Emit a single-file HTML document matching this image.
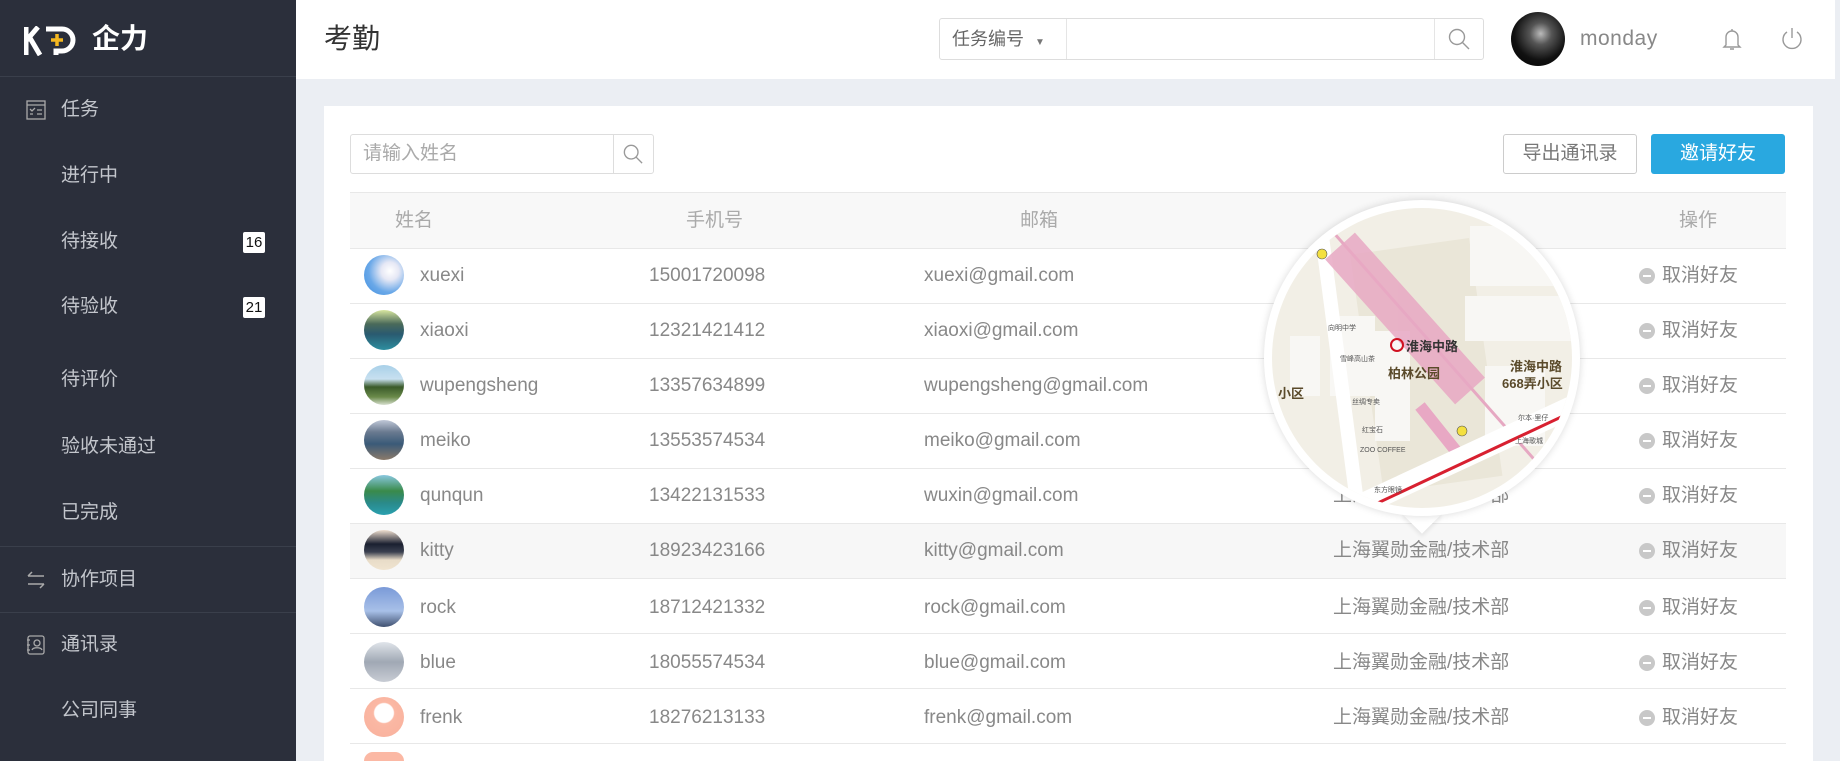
<!DOCTYPE html>
<html style="width:1840px;height:761px;overflow:hidden"><head><meta charset="utf-8">
<style>
*{margin:0;padding:0;box-sizing:border-box}
body{width:1840px;height:761px;overflow:hidden;background:#ebeef3;font-family:"Liberation Sans","Noto Sans CJK SC",sans-serif;position:relative}
.side{position:absolute;left:0;top:0;width:296px;height:761px;background:#2b2f3b}
.logo{height:77px;border-bottom:1px solid #3a3f4b;position:relative}
.nav{position:absolute;left:61px;color:#c3c6cc;font-size:19px;line-height:24px;transform:translateY(-12px)}
.ico{position:absolute;left:26px;transform:translateY(-10px)}
.badge{position:absolute;left:243px;width:22px;height:21px;background:#fff;color:#111;font-size:15px;line-height:21px;text-align:center;border-radius:2px;transform:translateY(-10px)}
.div{position:absolute;left:0;width:296px;height:1px;background:#3a3f4b}
.hdr{position:absolute;left:296px;top:0;width:1539px;height:79px;background:#fff}
.card{position:absolute;left:324px;top:106px;width:1489px;height:655px;background:#fff}
.t{position:absolute;color:#888;font-size:19px;line-height:24px;transform:translateY(-11px);white-space:nowrap}
.row{position:absolute;left:350px;width:1436px;height:55px;border-bottom:1px solid #e8e8e8}
.av{position:absolute;left:364px;width:40px;height:40px;border-radius:50%;transform:translateY(-20px)}
.op{position:absolute;left:1639px;width:16px;height:16px;border-radius:50%;background:#c8c8c8;transform:translateY(-7px)}
.op:after{content:"";position:absolute;left:4px;top:7px;width:8px;height:2px;background:#fff}
</style></head><body>
<div class="side">
 <div class="logo">
  <svg style="position:absolute;left:24px;top:26px" width="56" height="30" viewBox="0 0 56 30"><path d="M2 1v28M2 15 14 1M6 12l10 17" stroke="#fff" stroke-width="5" fill="none"/><path d="M22 3h16a11 11 0 0 1 0 22h-6v4" stroke="#fff" stroke-width="5" fill="none"/><path d="M33 8v12M27 14h12" stroke="#f5b820" stroke-width="3.5"/></svg>
  <div style="position:absolute;left:92px;top:22px;color:#fff;font-size:28px;font-weight:bold;line-height:34px">企力</div>
 </div>
 <svg class="ico" style="top:110px" width="20" height="20" viewBox="0 0 20 20" fill="none" stroke="#aaa" stroke-width="1.3"><rect x="1" y="1" width="18" height="18"/><path d="M1 5h18M4 9l2 2 3-3M11 10h5M4 14h3M11 14h5"/></svg>
 <div class="nav" style="top:110px">任务</div>
 <div class="nav" style="top:176px">进行中</div>
 <div class="nav" style="top:242px">待接收</div><div class="badge" style="top:242px">16</div>
 <div class="nav" style="top:307px">待验收</div><div class="badge" style="top:307px">21</div>
 <div class="nav" style="top:380px">待评价</div>
 <div class="nav" style="top:447px">验收未通过</div>
 <div class="nav" style="top:513px">已完成</div>
 <div class="div" style="top:546px"></div>
 <svg class="ico" style="top:580px" width="20" height="20" viewBox="0 0 20 20" fill="none" stroke="#aaa" stroke-width="1.5"><path d="M2 6h16M2 6l4-4M18 14H2M18 14l-4 4"/></svg>
 <div class="nav" style="top:580px">协作项目</div>
 <div class="div" style="top:612px"></div>
 <svg class="ico" style="top:645px" width="20" height="20" viewBox="0 0 20 20" fill="none" stroke="#aaa" stroke-width="1.3"><rect x="2" y="1" width="16" height="18" rx="2"/><circle cx="11" cy="8" r="3"/><path d="M6 15c1-3 9-3 10 0M1 5h3M1 10h3M1 15h3"/></svg>
 <div class="nav" style="top:645px">通讯录</div>
 <div class="nav" style="top:711px">公司同事</div>
</div>

<div class="hdr">
 <div style="position:absolute;left:28px;top:22px;font-size:28px;color:#333;line-height:34px">考勤</div>
 <div style="position:absolute;left:643px;top:18px;width:545px;height:42px;border:1px solid #ddd;border-radius:3px">
  <div style="position:absolute;left:0;top:0;width:127px;height:40px;border-right:1px solid #e5e5e5;color:#666;font-size:18px;line-height:40px;padding-left:12px">任务编号 <span style="font-size:10px;color:#777;margin-left:6px">▼</span></div>
  <div style="position:absolute;right:0;top:0;width:49px;height:40px;border-left:1px solid #e5e5e5"></div>
  <svg style="position:absolute;right:13px;top:9px" width="22" height="22" viewBox="0 0 22 22" fill="none" stroke="#999" stroke-width="1.4"><circle cx="9" cy="9" r="7.5"/><path d="M14.5 14.5 21 21"/></svg>
 </div>
 <div style="position:absolute;left:1215px;top:12px;width:54px;height:54px;border-radius:50%;background:radial-gradient(circle at 55% 40%,#bbb 0,#555 25%,#111 60%,#000 100%)"></div>
 <div style="position:absolute;left:1284px;top:25px;font-size:21px;color:#888;line-height:28px;letter-spacing:0.5px">monday</div>
 <svg style="position:absolute;left:1426px;top:27px" width="20" height="24" viewBox="0 0 20 24" fill="none" stroke="#999" stroke-width="1.4"><path d="M4 18V10a6 6 0 0 1 12 0v8l2 2H2zM8 22h4M10 2v2"/></svg>
 <svg style="position:absolute;left:1484px;top:27px" width="24" height="24" viewBox="0 0 24 24" fill="none" stroke="#999" stroke-width="1.4"><path d="M7 5a9 9 0 1 0 10 0M12 1v10"/></svg>
</div>

<div class="card"></div>
<div style="position:absolute;left:350px;top:134px;width:304px;height:40px;border:1px solid #ddd;border-radius:3px">
 <div style="position:absolute;left:12px;top:0;line-height:38px;font-size:19px;color:#aaa">请输入姓名</div>
 <div style="position:absolute;right:0;top:0;width:40px;height:38px;border-left:1px solid #ddd"></div>
 <svg style="position:absolute;right:10px;top:9px" width="20" height="20" viewBox="0 0 22 22" fill="none" stroke="#999" stroke-width="1.5"><circle cx="9" cy="9" r="7.5"/><path d="M14.5 14.5 21 21"/></svg>
</div>
<div style="position:absolute;left:1503px;top:134px;width:134px;height:40px;border:1px solid #ccc;border-radius:3px;font-size:19px;color:#777;text-align:center;line-height:38px">导出通讯录</div>
<div style="position:absolute;left:1651px;top:134px;width:134px;height:40px;background:#29a8e0;border-radius:3px;font-size:19px;color:#fff;text-align:center;line-height:40px">邀请好友</div>

<div style="position:absolute;left:350px;top:192px;width:1436px;height:57px;background:#f8f8f8;border-top:1px solid #e8e8e8;border-bottom:1px solid #e8e8e8"></div>
<div class="t" style="top:220px;left:395px;color:#aaa">姓名</div>
<div class="t" style="top:220px;left:686px;color:#aaa">手机号</div>
<div class="t" style="top:220px;left:1020px;color:#aaa">邮箱</div>
<div class="t" style="top:220px;left:1679px;color:#aaa">操作</div>

<div class="row" style="top:249px"></div>
<div class="row" style="top:304px"></div>
<div class="row" style="top:359px"></div>
<div class="row" style="top:414px"></div>
<div class="row" style="top:469px"></div>
<div class="row" style="top:524px;background:#f7f7f7"></div>
<div class="row" style="top:579px"></div>
<div class="row" style="top:634px"></div>
<div class="row" style="top:689px"></div>

<div class="av" style="top:275px;background:radial-gradient(circle at 65% 40%,#fff 0,#e6e8f5 25%,#6aa8e8 60%,#3d8ee0 100%)"></div>
<div class="av" style="top:330px;background:linear-gradient(#d8e6a0 0,#4a6a5a 35%,#2a5a70 60%,#2d8ea0 100%)"></div>
<div class="av" style="top:385px;background:linear-gradient(#a8d0e8 0,#c8e0f0 35%,#3a5a2a 55%,#6a8a4a 80%,#d8e0d0 100%)"></div>
<div class="av" style="top:440px;background:linear-gradient(#c0c8d8 0,#6a7a90 30%,#3a5a78 60%,#8a7a6a 100%)"></div>
<div class="av" style="top:495px;background:linear-gradient(#8ac8e0 0,#3a8a4a 40%,#2a8a8a 70%,#2aa0b0 100%)"></div>
<div class="av" style="top:550px;background:linear-gradient(#f0e0d0 0,#1a2030 35%,#3a4050 55%,#e8dcc8 75%,#f0e4d0 100%)"></div>
<div class="av" style="top:607px;background:linear-gradient(#7a9ad8 0,#a8c0e8 60%,#405070 100%)"></div>
<div class="av" style="top:662px;background:linear-gradient(#e0e4ea 0,#a0a8b4 50%,#c8ccd4 100%)"></div>
<div class="av" style="top:717px;background:radial-gradient(circle at 50% 40%,#fff 0,#fff 30%,#fbb8a4 34%,#f8b09c 100%)"></div>

<div class="t" style="top:275px;left:420px">xuexi</div><div class="t" style="top:275px;left:649px">15001720098</div><div class="t" style="top:275px;left:924px">xuexi@gmail.com</div>
<div class="t" style="top:330px;left:420px">xiaoxi</div><div class="t" style="top:330px;left:649px">12321421412</div><div class="t" style="top:330px;left:924px">xiaoxi@gmail.com</div>
<div class="t" style="top:385px;left:420px">wupengsheng</div><div class="t" style="top:385px;left:649px">13357634899</div><div class="t" style="top:385px;left:924px">wupengsheng@gmail.com</div>
<div class="t" style="top:440px;left:420px">meiko</div><div class="t" style="top:440px;left:649px">13553574534</div><div class="t" style="top:440px;left:924px">meiko@gmail.com</div>
<div class="t" style="top:495px;left:420px">qunqun</div><div class="t" style="top:495px;left:649px">13422131533</div><div class="t" style="top:495px;left:924px">wuxin@gmail.com</div>
<div class="t" style="top:550px;left:420px">kitty</div><div class="t" style="top:550px;left:649px">18923423166</div><div class="t" style="top:550px;left:924px">kitty@gmail.com</div><div class="t" style="top:550px;left:1333px">上海翼勋金融/技术部</div>
<div class="t" style="top:607px;left:420px">rock</div><div class="t" style="top:607px;left:649px">18712421332</div><div class="t" style="top:607px;left:924px">rock@gmail.com</div><div class="t" style="top:607px;left:1333px">上海翼勋金融/技术部</div>
<div class="t" style="top:662px;left:420px">blue</div><div class="t" style="top:662px;left:649px">18055574534</div><div class="t" style="top:662px;left:924px">blue@gmail.com</div><div class="t" style="top:662px;left:1333px">上海翼勋金融/技术部</div>
<div class="t" style="top:717px;left:420px">frenk</div><div class="t" style="top:717px;left:649px">18276213133</div><div class="t" style="top:717px;left:924px">frenk@gmail.com</div><div class="t" style="top:717px;left:1333px">上海翼勋金融/技术部</div>
<div class="t" style="top:495px;left:1333px">上海翼勋金融/技术部</div>

<div class="op" style="top:275px"></div><div class="t" style="top:275px;left:1662px">取消好友</div>
<div class="op" style="top:330px"></div><div class="t" style="top:330px;left:1662px">取消好友</div>
<div class="op" style="top:385px"></div><div class="t" style="top:385px;left:1662px">取消好友</div>
<div class="op" style="top:440px"></div><div class="t" style="top:440px;left:1662px">取消好友</div>
<div class="op" style="top:495px"></div><div class="t" style="top:495px;left:1662px">取消好友</div>
<div class="op" style="top:550px"></div><div class="t" style="top:550px;left:1662px">取消好友</div>
<div class="op" style="top:607px"></div><div class="t" style="top:607px;left:1662px">取消好友</div>
<div class="op" style="top:662px"></div><div class="t" style="top:662px;left:1662px">取消好友</div>
<div class="op" style="top:717px"></div><div class="t" style="top:717px;left:1662px">取消好友</div>
<div style="position:absolute;left:364px;top:752px;width:40px;height:9px;border-radius:20px 20px 0 0;background:#fbb8a4"></div>

<div style="position:absolute;left:1408px;top:500px;width:28px;height:28px;background:#fff;transform:rotate(45deg);box-shadow:2px 2px 4px rgba(0,0,0,.08)"></div>
<div style="position:absolute;left:1264px;top:200px;width:316px;height:316px;border-radius:50%;background:#fff;box-shadow:0 0 8px rgba(0,0,0,.15)"></div>
<svg style="position:absolute;left:1270px;top:206px" width="304" height="304" viewBox="0 0 304 304">
 <defs><clipPath id="c"><circle cx="152" cy="152" r="150"/></clipPath></defs>
 <g clip-path="url(#c)" font-family="Liberation Sans,Noto Sans CJK SC,sans-serif">
  <rect width="304" height="304" fill="#f2efe6"/>
  <rect x="95" y="40" width="120" height="240" fill="#eae6d8" transform="rotate(-8 150 150)"/>
  <rect x="200" y="20" width="90" height="60" fill="#f8f7f4"/>
  <rect x="195" y="90" width="110" height="45" fill="#f8f7f4"/>
  <rect x="215" y="160" width="60" height="80" fill="#f8f7f4"/>
  <rect x="60" y="110" width="45" height="80" fill="#f8f7f4"/>
  <rect x="105" y="125" width="35" height="110" fill="#f8f7f4"/>
  <rect x="20" y="130" width="30" height="60" fill="#f8f7f4"/>
  <path d="M48 0 L88 304" stroke="#fff" stroke-width="14"/>
  <path d="M40 0 L270 260" stroke="#e6a8c2" stroke-width="3"/>
  <path d="M70 40 L200 185" stroke="#e8a8c4" stroke-width="40" opacity=".85"/>
  <path d="M150 200 L190 250" stroke="#e8a8c4" stroke-width="12"/>
  <path d="M80 304 L304 200" stroke="#fff" stroke-width="22"/>
  <path d="M80 310 L304 205" stroke="#d82030" stroke-width="3"/>
  <circle cx="52" cy="48" r="5" fill="#f4e040" stroke="#555" stroke-width=".6"/>
  <circle cx="192" cy="225" r="5" fill="#f4e040" stroke="#555" stroke-width=".6"/>
  <circle cx="127" cy="139" r="6" fill="none" stroke="#d01020" stroke-width="2"/>
  <text x="136" y="145" font-size="13" font-weight="bold" fill="#333">淮海中路</text>
  <text x="118" y="172" font-size="13" font-weight="bold" fill="#5a4a2a">柏林公园</text>
  <text x="240" y="165" font-size="13" font-weight="bold" fill="#5a4a2a">淮海中路</text>
  <text x="232" y="182" font-size="13" font-weight="bold" fill="#5a4a2a">668弄小区</text>
  <text x="8" y="192" font-size="13" font-weight="bold" fill="#5a4a2a">小区</text>
  <text x="58" y="124" font-size="7" fill="#555">向明中学</text>
  <text x="70" y="155" font-size="7" fill="#555">雪峰高山茶</text>
  <text x="82" y="198" font-size="7" fill="#555">丝绸专卖</text>
  <text x="92" y="226" font-size="7" fill="#555">红宝石</text>
  <text x="90" y="246" font-size="7" fill="#555">ZOO COFFEE</text>
  <text x="104" y="286" font-size="7" fill="#555">东方眼镜</text>
  <text x="248" y="214" font-size="7" fill="#555">尔本·里仔</text>
  <text x="245" y="237" font-size="7" fill="#555">上海歌城</text>
 </g>
</svg>
</body></html>
